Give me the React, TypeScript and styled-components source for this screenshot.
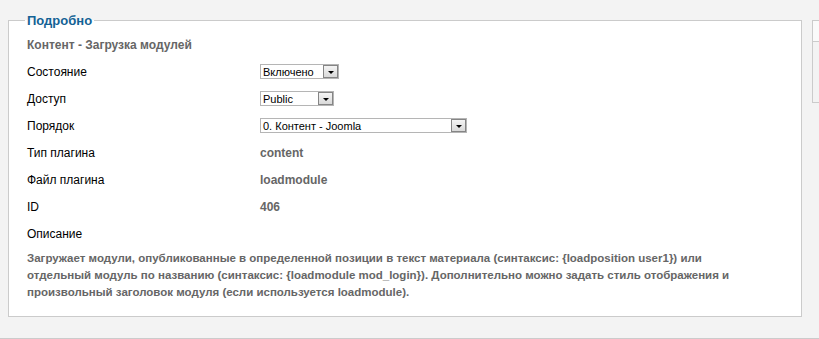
import React from 'react';
import styled, { createGlobalStyle } from 'styled-components';

const GlobalStyle = createGlobalStyle`
  html, body {
    margin: 0;
    padding: 0;
    background: #f3f3f3;
    font-family: "Liberation Sans", Arial, sans-serif;
  }
`;

const Page = styled.div`
  height: 339px;
  overflow: hidden;
  padding: 13px 0 0 8px;
  box-sizing: border-box;
`;

const Columns = styled.div`
  display: grid;
  grid-template-columns: 794px 200px;
  column-gap: 10px;
  align-items: start;
`;

const Fieldset = styled.fieldset`
  margin: 0;
  padding: 0 18px 15px 18px;
  border: 1px solid #cbcbcb;
  background: #fff;
  min-width: 0;
`;

const Legend = styled.legend`
  margin-left: -2px;
  padding: 0 2px;
  font-size: 13px;
  line-height: 15px;
  font-weight: bold;
  color: #146295;
`;

const Heading = styled.div`
  margin-top: 3px;
  height: 27px;
  display: flex;
  align-items: center;
  font-size: 12px;
  font-weight: bold;
  color: #666;
`;

const Row = styled.div`
  display: grid;
  grid-template-columns: 233px 1fr;
  height: 27px;
  align-items: center;
`;

const Label = styled.span`
  font-size: 12px;
  color: #000;
`;

const Value = styled.span`
  font-size: 12px;
  font-weight: bold;
  color: #666;
`;

const Description = styled.p`
  margin: 3px 0 0;
  max-width: 716px;
  font-size: 11.5px;
  line-height: 17px;
  font-weight: bold;
  color: #666;
`;

const SelectBox = styled.div<{ $width: number }>`
  width: ${(p) => p.$width}px;
  height: 15px;
  box-sizing: border-box;
  border: 1px solid #b5b5b5;
  background: #fff;
  display: flex;
  align-items: center;
  justify-content: space-between;
  padding-left: 2px;
  font-size: 11px;
  color: #000;
`;

const ArrowButton = styled.span`
  width: 15px;
  height: 13px;
  box-sizing: border-box;
  border: 1px solid #858585;
  background: linear-gradient(#f4f4f4, #d9d9d9);
  display: flex;
  align-items: center;
  justify-content: center;

  &::after {
    content: '';
    margin-top: 2px;
    border-left: 3px solid transparent;
    border-right: 3px solid transparent;
    border-top: 3px solid #000;
  }
`;

const SidePanel = styled.div`
  margin-top: 7px;
  height: 81px;
  border: 1px solid #cbcbcb;
  border-right: none;
  background: #f3f3f3;
`;

const SideHeader = styled.div`
  height: 20px;
  background: #fafafa;
  border-bottom: 1px solid #cbcbcb;
`;

const BottomRule = styled.div`
  margin: 21px 0 0 -8px;
  border-top: 1px solid #cbcbcb;
`;

const Select: React.FC<{ width: number; value: string }> = ({ width, value }) => (
  <SelectBox $width={width}>
    <span>{value}</span>
    <ArrowButton />
  </SelectBox>
);

const descriptionText =
  'Загружает модули, опубликованные в определенной позиции в текст материала (синтаксис: {loadposition user1}) или ' +
  'отдельный модуль по названию (синтаксис: {loadmodule mod_login}). Дополнительно можно задать стиль отображения и ' +
  'произвольный заголовок модуля (если используется loadmodule).';

export default function App() {
  return (
    <>
      <GlobalStyle />
      <Page>
        <Columns>
          <Fieldset>
            <Legend>Подробно</Legend>
            <Heading>Контент - Загрузка модулей</Heading>
            <Row>
              <Label>Состояние</Label>
              <Select width={79} value="Включено" />
            </Row>
            <Row>
              <Label>Доступ</Label>
              <Select width={74} value="Public" />
            </Row>
            <Row>
              <Label>Порядок</Label>
              <Select width={207} value="0. Контент - Joomla" />
            </Row>
            <Row>
              <Label>Тип плагина</Label>
              <Value>content</Value>
            </Row>
            <Row>
              <Label>Файл плагина</Label>
              <Value>loadmodule</Value>
            </Row>
            <Row>
              <Label>ID</Label>
              <Value>406</Value>
            </Row>
            <Row>
              <Label>Описание</Label>
            </Row>
            <Description>{descriptionText}</Description>
          </Fieldset>
          <SidePanel>
            <SideHeader />
          </SidePanel>
        </Columns>
        <BottomRule />
      </Page>
    </>
  );
}
